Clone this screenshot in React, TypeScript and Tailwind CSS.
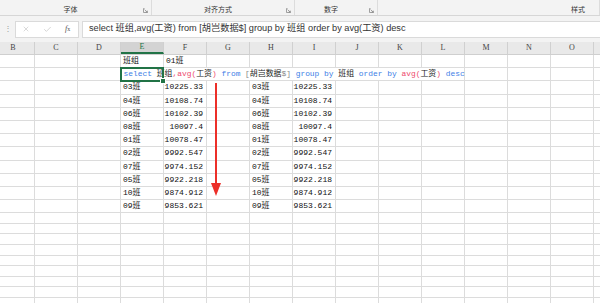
import { X, Check } from "lucide-react";

const COLS = ["B", "C", "D", "E", "F", "G", "H", "I", "J", "K", "L", "M", "N", "O", "P"];

const CLASSES = ["03班", "04班", "06班", "08班", "01班", "02班", "07班", "05班", "10班", "09班"];
const VALUES = ["10225.33", "10108.74", "10102.39", "10097.4", "10078.47", "9992.547", "9974.152", "9922.218", "9874.912", "9853.621"];

const BLUE = "text-[#3d7ee6]";
const PINK = "text-[#ee4a6e]";
const INK = "text-[#222]";
const GRAY = "text-[#888]";

const SQL: [string, string][] = [
  ["select ", BLUE],
  ["班组", INK],
  [",avg(", PINK],
  ["工资", INK],
  [") ", PINK],
  ["from ", BLUE],
  ["[", GRAY],
  ["胡岂数据", INK],
  ["$]", GRAY],
  [" group by ", BLUE],
  ["班组", INK],
  [" order by ", BLUE],
  ["avg(", PINK],
  ["工资", INK],
  [")", PINK],
  [" desc", BLUE],
];

function Launcher() {
  return (
    <svg width="5" height="5" viewBox="0 0 5 5" className="absolute right-[3px] bottom-[2px]">
      <path d="M1.5 0.5H0.5V4.5H4.5V3.5" fill="none" stroke="#8a8a8a" strokeWidth="0.8" />
      <path d="M1.6 1.6L4.2 4.2M4.2 2.6V4.2H2.6" fill="none" stroke="#8a8a8a" strokeWidth="0.8" />
    </svg>
  );
}

function RibbonGroup({ label, width, launcher = true, align = "center" }: { label: string; width: string; launcher?: boolean; align?: "center" | "end" }) {
  return (
    <div className={`relative h-full ${width} flex items-center pt-[3px] border-r border-[#dcdcdc] ${align === "center" ? "justify-center pr-[10px]" : "justify-end pr-[14px]"}`}>
      <span className="text-[7px] text-[#333] leading-none">{label}</span>
      {launcher && <Launcher />}
    </div>
  );
}

type Cell = { text?: string; num?: boolean; sql?: boolean };

function rowCells(r: number): Record<string, Cell> {
  if (r === 0) return { E: { text: "班组" }, F: { text: "01班" } };
  if (r === 1) return { E: { sql: true } };
  const i = r - 2;
  if (i < CLASSES.length) {
    return {
      E: { text: CLASSES[i] },
      F: { text: VALUES[i], num: true },
      H: { text: CLASSES[i] },
      I: { text: VALUES[i], num: true },
    };
  }
  return {};
}

function GridRow({ r, height }: { r: number; height: string }) {
  const cells = rowCells(r);
  const spill = r === 1 ? ["E", "F", "G", "H", "I", "J", "K"] : [];
  return (
    <div className={`flex ${height}`}>
      {COLS.map((c) => {
        const cell = cells[c];
        const noRight = spill.includes(c);
        return (
          <div
            key={c}
            className={`relative w-[43px] shrink-0 h-full border-b border-[#dcdcdc] ${noRight ? "" : "border-r"} flex items-center ${cell?.num ? "justify-end pr-[3px]" : "pl-[2px]"}`}
          >
            {cell?.text && <span className="text-[8px] leading-none text-[#111] whitespace-nowrap">{cell.text}</span>}
            {cell?.sql && (
              <>
                <span className="relative z-10 text-[7.9px] leading-none whitespace-nowrap pl-[0.5px]">
                  {SQL.map(([t, cls], k) => (
                    <span key={k} className={cls}>
                      {t.replace(/ /g, "\u00a0")}
                    </span>
                  ))}
                </span>
                <div className="absolute -left-[1px] -top-[1px] w-[44px] h-[15px] border-2 border-[#217346] z-20">
                  <div className="absolute -right-[3px] -bottom-[3px] w-[4px] h-[4px] bg-[#217346] outline outline-1 outline-white" />
                </div>
              </>
            )}
          </div>
        );
      })}
    </div>
  );
}

export default function App() {
  return (
    <div
      className="relative w-[600px] h-[303px] overflow-hidden bg-white"
      style={{ fontFamily: '"Liberation Mono", "Noto Sans CJK SC", monospace' }}
    >
      {/* ribbon group labels */}
      <div className="flex h-[16px] bg-[#f3f3f3] border-b border-[#d6d6d6]" style={{ fontFamily: '"Noto Sans CJK SC", sans-serif' }}>
        <RibbonGroup label="字体" width="w-[152px]" />
        <RibbonGroup label="对齐方式" width="w-[143px]" />
        <RibbonGroup label="数字" width="w-[83px]" />
        <RibbonGroup label="样式" width="flex-1" launcher={false} align="end" />
      </div>

      {/* formula bar */}
      <div className="flex items-center h-[26px] bg-[#f3f3f3]">
        <div className="w-[15px] flex justify-center pl-[1px] text-[8px] text-[#9a9a9a] leading-none">⋮</div>
        <div className="flex items-center h-[17px] w-[64px] bg-white border border-[#dadada]">
          <div className="w-[21px] flex justify-center text-[#b5b5b5]">
            <X size={8} strokeWidth={1.5} />
          </div>
          <div className="w-[21px] flex justify-center text-[#b5b5b5]">
            <Check size={9} strokeWidth={1.5} />
          </div>
          <div className="w-[21px] flex justify-center text-[#555] text-[8px] italic leading-none" style={{ fontFamily: '"Liberation Serif", serif' }}>
            f<span className="text-[6px] not-italic relative top-[1px]">x</span>
          </div>
        </div>
        <div className="ml-[3px] flex-1 h-[17px] bg-white border border-[#dadada] border-r-0 flex items-center pl-[6px]">
          <span className="text-[9.2px] leading-none text-[#333] whitespace-nowrap" style={{ fontFamily: '"Liberation Sans", "Noto Sans CJK SC", sans-serif' }}>
            select 班组,avg(工资) from [胡岂数据$] group by 班组 order by avg(工资) desc
          </span>
        </div>
      </div>

      {/* grid */}
      <div className="-ml-[8px]">
        <div className="flex h-[13px] bg-[#e9e9e9] border-b border-[#cfcfcf]">
          {COLS.map((c) => (
            <div
              key={c}
              className={`w-[43px] shrink-0 h-full flex items-center justify-center border-r border-[#d0d0d0] text-[8px] leading-none ${c === "E" ? "bg-[#d3d3d3] text-[#217346] border-b-2 border-b-[#217346]" : "text-[#444]"}`}
              style={{ fontFamily: '"Liberation Serif", serif' }}
            >
              {c === "P" ? "" : c}
            </div>
          ))}
        </div>
        {Array.from({ length: 12 }, (_, r) => (
          <GridRow key={r} r={r} height="h-[13.2px]" />
        ))}
        {Array.from({ length: 9 }, (_, r) => (
          <GridRow key={`e${r}`} r={100 + r} height="h-[10.6px]" />
        ))}
      </div>

      {/* red arrow annotation */}
      <svg width="12" height="114" viewBox="0 0 12 114" className="absolute left-[209.5px] top-[83px] z-30">
        <rect x="5" y="0" width="2" height="101" fill="#ec2f29" />
        <polygon points="1,100 11,100 6,113" fill="#ec2f29" />
      </svg>
    </div>
  );
}
